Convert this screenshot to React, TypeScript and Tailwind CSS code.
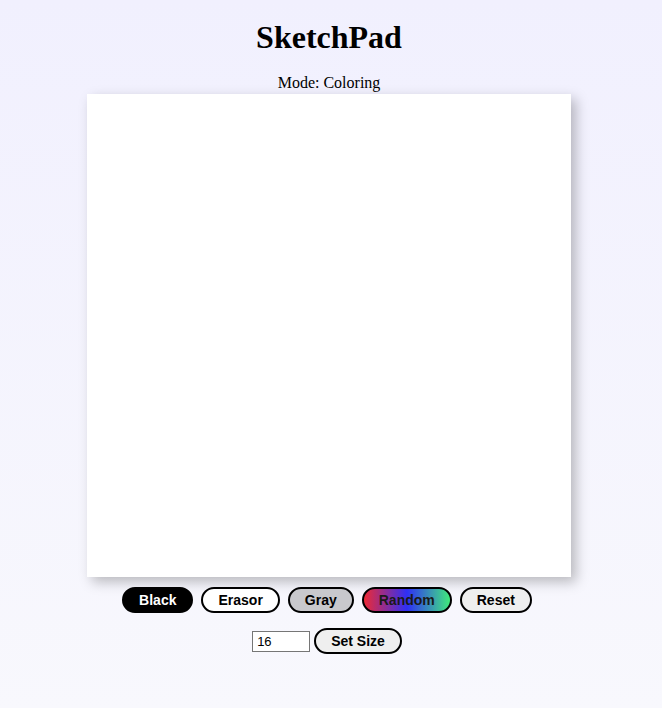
const buttonBase =
  "rounded-full border-2 border-black px-[15px] py-[3px] text-[14px] font-bold leading-[16px] font-['Liberation_Sans',Arial,sans-serif]";

export default function App() {
  return (
    <div className="min-h-[708px] bg-gradient-to-b from-[#f1f0fe] to-[#f8f8fd] font-['Liberation_Serif','Times_New_Roman',serif] text-black">
      <div className="flex flex-col items-center pr-[4px] pt-[19px]">
        <h1 className="text-[32px] font-bold leading-[37px]">SketchPad</h1>
        <p className="mt-[18px] text-[16px] leading-[18px]">Mode: Coloring</p>
        <div className="mt-[2px] h-[483px] w-[484px] bg-white shadow-[5px_5px_12px_rgba(0,0,0,0.25)]" />
        <div className="mr-[4px] mt-[10px] flex gap-2">
          <button className={`${buttonBase} bg-black text-white`}>Black</button>
          <button className={`${buttonBase} bg-white`}>Erasor</button>
          <button className={`${buttonBase} bg-[#c8c8cc]`}>Gray</button>
          <button
            className={`${buttonBase} bg-[linear-gradient(to_right,#ec2a36,#2f2ff5,#40ea7c)] text-[#1a1a1a]`}
          >
            Random
          </button>
          <button className={`${buttonBase} bg-[#efefef]`}>Reset</button>
        </div>
        <div className="mr-[4px] mt-[15px] flex items-center gap-1">
          <input
            type="number"
            defaultValue={16}
            className="h-[21px] w-[58px] border border-[#767676] bg-white px-[4px] text-[13px] font-['Liberation_Sans',Arial,sans-serif] outline-none"
          />
          <button className={`${buttonBase} bg-[#efefef]`}>Set Size</button>
        </div>
      </div>
    </div>
  );
}
